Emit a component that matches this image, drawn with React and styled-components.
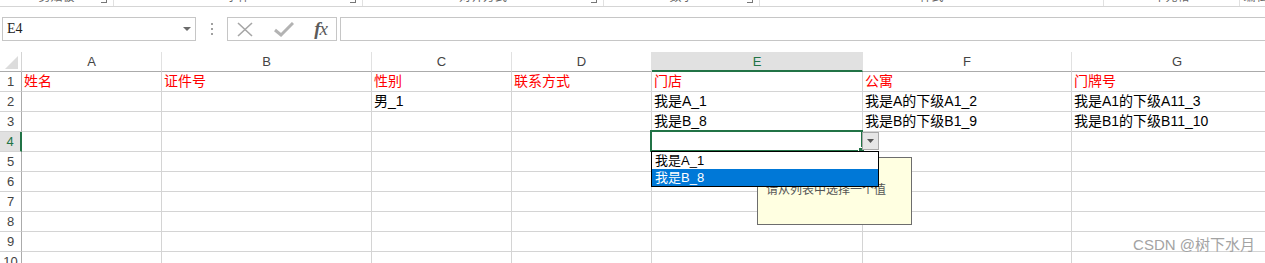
import styled, { createGlobalStyle } from "styled-components";

const GlobalStyle = createGlobalStyle`
  html, body {
    margin: 0;
    padding: 0;
    background: #ffffff;
  }
  #root {
    width: 1265px;
    height: 263px;
    overflow: hidden;
  }
`;

const columns = [
  { key: "A", width: 140 },
  { key: "B", width: 210 },
  { key: "C", width: 140 },
  { key: "D", width: 140 },
  { key: "E", width: 211 },
  { key: "F", width: 209 },
  { key: "G", width: 210 },
];

const rows = [
  { A: "姓名", B: "证件号", C: "性别", D: "联系方式", E: "门店", F: "公寓", G: "门牌号", red: true },
  { C: "男_1", E: "我是A_1", F: "我是A的下级A1_2", G: "我是A1的下级A11_3" },
  { E: "我是B_8", F: "我是B的下级B1_9", G: "我是B1的下级B11_10" },
  {},
  {},
  {},
  {},
  {},
  {},
  {},
];

const ribbonGroups = [
  { label: "剪贴板", width: 113, launcher: true },
  { label: "字体", width: 248, launcher: true },
  { label: "对齐方式", width: 240, launcher: true },
  { label: "数字", width: 155, launcher: true },
  { label: "样式", width: 343 },
  { label: "单元格", width: 135 },
  { label: "编辑", width: 31 },
];

function App() {
  return (
    <Page>
      <GlobalStyle />
      <RibbonStrip>
        {ribbonGroups.map((g) => (
          <RibbonGroup key={g.label} $width={g.width}>
            <RibbonLabel>{g.label}</RibbonLabel>
            {g.launcher && <Launcher />}
          </RibbonGroup>
        ))}
      </RibbonStrip>

      <FormulaBar>
        <NameBox>
          <span>E4</span>
          <svg width="8" height="5" viewBox="0 0 8 5">
            <path d="M0 0 L8 0 L4 4 Z" fill="#6b6b6b" />
          </svg>
        </NameBox>
        <Grip>
          <i />
          <i />
          <i />
        </Grip>
        <FxButtons>
          <svg width="16" height="15" viewBox="0 0 16 15">
            <path d="M1 1 L15 14 M15 1 L1 14" stroke="#a6a6a6" strokeWidth="1.6" fill="none" />
          </svg>
          <svg width="20" height="15" viewBox="0 0 20 15">
            <path d="M1 8 L7 13 L19 1" stroke="#b3b3b3" strokeWidth="3" fill="none" />
          </svg>
          <FxText>
            <i>f</i>x
          </FxText>
        </FxButtons>
        <FormulaInput />
      </FormulaBar>

      <SheetWrap>
        <Grid>
          <Corner>
            <svg width="13" height="13" viewBox="0 0 13 13">
              <path d="M13 0 L13 13 L0 13 Z" fill="#dcdcdc" />
            </svg>
          </Corner>
          {columns.map((c) => (
            <ColHead key={c.key} $active={c.key === "E"} $last={c.key === "G"}>
              {c.key}
            </ColHead>
          ))}
          {rows.map((r, i) => (
            <Row key={i} data={r} index={i + 1} />
          ))}
        </Grid>

        <Selection>
          <FillHandle />
        </Selection>
        <Tooltip>请从列表中选择一个值</Tooltip>
        <DropButton>
          <svg width="7" height="4" viewBox="0 0 7 4">
            <path d="M0 0 L7 0 L3.5 4 Z" fill="#555" />
          </svg>
        </DropButton>
        <DropList>
          <DropItem>我是A_1</DropItem>
          <DropItem $selected>我是B_8</DropItem>
        </DropList>
      </SheetWrap>

      <Watermark>CSDN @树下水月</Watermark>
    </Page>
  );
}

function Row({ data, index }) {
  return (
    <>
      <RowHead $active={index === 4}>{index}</RowHead>
      {columns.map((c) => (
        <Cell key={c.key} $red={data.red}>
          {data[c.key]}
        </Cell>
      ))}
    </>
  );
}

export default App;

const Page = styled.div`
  position: relative;
  width: 1265px;
  height: 263px;
  overflow: hidden;
  background: #ffffff;
`;

const RibbonStrip = styled.div`
  display: flex;
  height: 6px;
  overflow: hidden;
  border-bottom: 1px solid #d5d5d5;
`;

const RibbonGroup = styled.div`
  position: relative;
  flex: 0 0 ${(p) => p.$width}px;
  display: flex;
  justify-content: center;
  border-right: 1px solid #e1e1e1;
  height: 6px;
`;

const RibbonLabel = styled.span`
  font-family: "Noto Sans CJK SC", sans-serif;
  font-size: 12px;
  line-height: 14px;
  color: #666;
  margin-top: -11px;
`;

const Launcher = styled.span`
  position: absolute;
  right: 6px;
  top: -3px;
  width: 5px;
  height: 5px;
  border-right: 1px solid #777;
  border-bottom: 1px solid #777;
`;

const FormulaBar = styled.div`
  display: flex;
  align-items: stretch;
  height: 24px;
  margin-top: 10px;
  padding-left: 2px;
`;

const NameBox = styled.div`
  box-sizing: border-box;
  width: 194px;
  border: 1px solid #c6c6c6;
  display: flex;
  align-items: center;
  justify-content: space-between;
  padding: 0 4px 0 4px;
  font-family: "Liberation Serif", serif;
  font-size: 14px;
  color: #222;
`;

const Grip = styled.div`
  width: 31px;
  display: flex;
  flex-direction: column;
  align-items: center;
  justify-content: center;
  gap: 3px;

  i {
    width: 2px;
    height: 2px;
    background: #a0a0a0;
  }
`;

const FxButtons = styled.div`
  box-sizing: border-box;
  width: 110px;
  border: 1px solid #c6c6c6;
  display: flex;
  align-items: center;
  justify-content: space-between;
  padding: 0 9px 0 9px;
`;

const FxText = styled.span`
  font-family: "Liberation Serif", serif;
  font-style: italic;
  font-size: 19px;
  color: #5b5b5b;
  letter-spacing: -1px;

  i {
    font-weight: bold;
  }
`;

const FormulaInput = styled.div`
  box-sizing: border-box;
  flex: 1;
  margin-left: 3px;
  border: 1px solid #c6c6c6;
  border-right: none;
`;

const SheetWrap = styled.div`
  position: relative;
  margin-top: 11px;
`;

const Grid = styled.div`
  display: grid;
  grid-template-columns: 22px ${columns.map((c) => `${c.width}px`).join(" ")};
  grid-auto-rows: 20px;
`;

const Corner = styled.div`
  box-sizing: border-box;
  border-right: 1px solid #d4d4d4;
  border-bottom: 1px solid #ababab;
  display: flex;
  align-items: flex-end;
  justify-content: flex-end;
  padding: 0 3px 2px 0;
`;

const ColHead = styled.div`
  box-sizing: border-box;
  border-right: ${(p) => (p.$last ? "none" : "1px solid #e1e1e1")};
  border-bottom: ${(p) => (p.$active ? "2px solid #217346" : "1px solid #ababab")};
  background: ${(p) => (p.$active ? "#e1e1e1" : "#ffffff")};
  color: ${(p) => (p.$active ? "#217346" : "#444444")};
  font-family: "Liberation Sans", sans-serif;
  font-size: 13px;
  line-height: 19px;
  text-align: center;
`;

const RowHead = styled.div`
  box-sizing: border-box;
  border-right: ${(p) => (p.$active ? "2px solid #217346" : "1px solid #ababab")};
  border-bottom: 1px solid #d4d4d4;
  background: ${(p) => (p.$active ? "#e1e1e1" : "#ffffff")};
  color: ${(p) => (p.$active ? "#217346" : "#444444")};
  font-family: "Liberation Sans", sans-serif;
  font-size: 13px;
  line-height: 20px;
  text-align: center;
`;

const Cell = styled.div`
  box-sizing: border-box;
  border-right: 1px solid #d4d4d4;
  border-bottom: 1px solid #d4d4d4;
  padding-left: 2px;
  font-family: "Liberation Sans", "Noto Sans CJK SC", sans-serif;
  font-size: 14px;
  line-height: 19px;
  white-space: nowrap;
  overflow: hidden;
  color: ${(p) => (p.$red ? "#ff0000" : "#000000")};
`;

const Selection = styled.div`
  position: absolute;
  left: 650px;
  top: 78px;
  width: 213px;
  height: 22px;
  box-sizing: border-box;
  border: 2px solid #217346;
`;

const FillHandle = styled.div`
  position: absolute;
  right: -4px;
  bottom: -4px;
  width: 5px;
  height: 5px;
  background: #217346;
  border: 1px solid #ffffff;
`;

const DropButton = styled.div`
  position: absolute;
  left: 862px;
  top: 80px;
  width: 17px;
  height: 18px;
  box-sizing: border-box;
  border: 1px solid #a9a9a9;
  background: #e6e6e6;
  display: flex;
  align-items: center;
  justify-content: center;
`;

const DropList = styled.div`
  position: absolute;
  left: 651px;
  top: 99px;
  width: 228px;
  height: 36px;
  box-sizing: border-box;
  border: 1px solid #000000;
  background: #ffffff;
  display: flex;
  flex-direction: column;
`;

const DropItem = styled.div`
  height: 17px;
  padding-left: 3px;
  font-family: "Liberation Sans", "Noto Sans CJK SC", sans-serif;
  font-size: 13px;
  line-height: 17px;
  background: ${(p) => (p.$selected ? "#0078d7" : "transparent")};
  color: ${(p) => (p.$selected ? "#ffffff" : "#000000")};
`;

const Tooltip = styled.div`
  position: absolute;
  left: 757px;
  top: 105px;
  width: 155px;
  height: 68px;
  box-sizing: border-box;
  border: 1px solid #6d6d6d;
  background: #ffffe1;
  padding: 23px 0 0 8px;
  font-family: "Noto Sans CJK SC", sans-serif;
  font-size: 12px;
  line-height: 16px;
  color: #555555;
`;

const Watermark = styled.div`
  position: absolute;
  right: 10px;
  bottom: 9px;
  font-family: "Liberation Sans", "Noto Sans CJK SC", sans-serif;
  font-size: 15px;
  line-height: 18px;
  color: #a3a3a3;
`;
